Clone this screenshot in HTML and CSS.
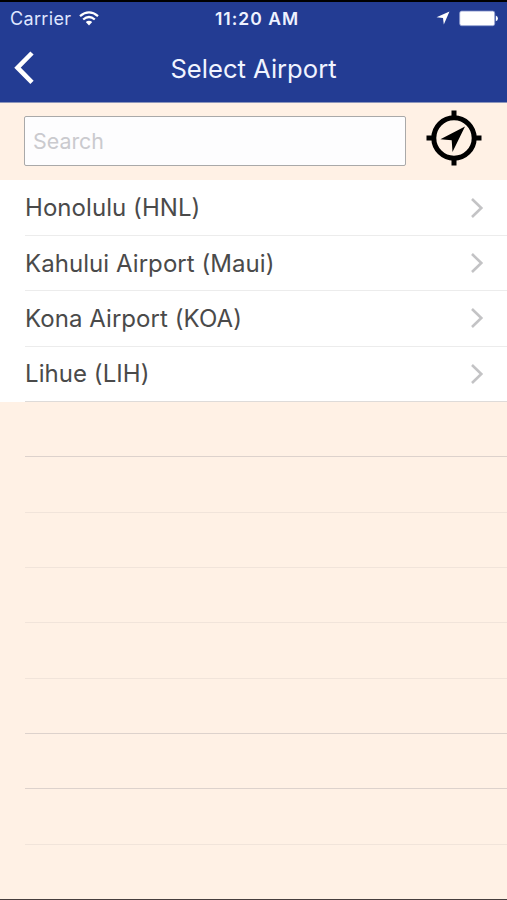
FILE: index.html
```html
<!DOCTYPE html>
<html lang="en">
  <head>
    <meta charset="utf-8">
    <title>Select Airport</title>
    <link rel="stylesheet" href="styles.css">
  </head>
  <body>
    <header>
      <div class="status">
        <div class="carrier">
          <span>Carrier</span>
          <svg class="wifi" width="20" height="15" viewBox="0 0 20 15">
            <path d="M1 5.2Q10-2.4 19 5.2" fill="none" stroke="#fff" stroke-width="2.3"/>
            <path d="M4.2 8.5Q10 3.5 15.8 8.5" fill="none" stroke="#fff" stroke-width="2.3"/>
            <path d="M6.8 11Q10 8.3 13.2 11L10 14.4z" fill="#fff"/>
          </svg>
        </div>
        <div class="time">11:20 AM</div>
        <div class="indicators">
          <svg width="14" height="14" viewBox="0 0 14 14"><path d="M13.5.5L7.8 13.5 7 7 .5 6.3z" fill="#fff"/></svg>
          <svg width="39" height="17" viewBox="0 0 39 17">
            <rect x=".7" y="1.1" width="35" height="14.6" rx="2" fill="#fff" stroke="#8f9dd0" stroke-width=".8"/>
            <path d="M36.8 5.6Q39 6.5 39 8.4T36.8 11.2z" fill="#fff"/>
          </svg>
        </div>
      </div>
      <div class="navbar">
        <a class="back" href="#" aria-label="Back">
          <svg width="22" height="34" viewBox="0 0 22 34"><path d="M19 2L4.5 16.7 19 31.4" fill="none" stroke="#fff" stroke-width="4.6"/></svg>
        </a>
        <h1>Select Airport</h1>
      </div>
    </header>
    <main>
      <div class="searchbar">
        <input class="search" type="text" placeholder="Search">
        <svg class="locate" width="56" height="56" viewBox="0 0 56 56">
          <circle cx="28" cy="28" r="20.2" fill="none" stroke="#000" stroke-width="5"/>
          <path d="M28 .5v9M28 46.5v9M.5 28h9M46.5 28h9" stroke="#000" stroke-width="5"/>
          <path d="M39 16.5L26.5 42 25.7 30.3 14.4 29.3z"/>
        </svg>
      </div>
      <ul class="airports">
        <li><span>Honolulu (HNL)</span><svg class="chevron" width="14" height="22" viewBox="0 0 14 22"><path d="M2 2l9.3 9L2 20" /></svg></li>
        <li><span>Kahului Airport (Maui)</span><svg class="chevron" width="14" height="22" viewBox="0 0 14 22"><path d="M2 2l9.3 9L2 20" /></svg></li>
        <li><span>Kona Airport (KOA)</span><svg class="chevron" width="14" height="22" viewBox="0 0 14 22"><path d="M2 2l9.3 9L2 20" /></svg></li>
        <li><span>Lihue (LIH)</span><svg class="chevron" width="14" height="22" viewBox="0 0 14 22"><path d="M2 2l9.3 9L2 20" /></svg></li>
      </ul>
      <ul class="empty">
        <li class="dark"></li>
        <li></li>
        <li></li>
        <li></li>
        <li></li>
        <li class="dark"></li>
        <li class="dark"></li>
        <li></li>
      </ul>
    </main>
  </body>
</html>
```

FILE: styles.css
```css
* {
  box-sizing: border-box;
}

body {
  display: flex;
  flex-direction: column;
  height: 900px;
  margin: 0;
  overflow: hidden;
  background: #fff1e5;
  border-bottom: 1px solid #463e3d;
  font-family: Inter, "Liberation Sans", sans-serif;
}

header {
  height: 103px;
  flex: none;
  background: #233c93;
  border-top: 2px solid #000;
  border-bottom: 1px solid #8d96bb;
  color: #fff;
}

.status {
  display: grid;
  grid-template-columns: 1fr auto 1fr;
  align-items: center;
  height: 32px;
  padding: 0 9px 0 10px;
  font-size: 18px;
}

.carrier {
  display: flex;
  align-items: center;
  gap: 8px;
  letter-spacing: 0.35px;
  color: #dfe6ff;
}

.time {
  padding-left: 6px;
  font-size: 17.5px;
  font-weight: 600;
  letter-spacing: 1px;
  color: #eef2ff;
}

.indicators {
  display: flex;
  align-items: center;
  justify-content: flex-end;
  gap: 9px;
}

.navbar {
  display: grid;
  grid-template-columns: 50px 1fr 50px;
  align-items: center;
  height: 68px;
}

.back {
  display: flex;
  padding-left: 13px;
}

h1 {
  margin: 0;
  text-align: center;
  font-size: 25.6px;
  font-weight: 400;
  color: #f1f4ff;
}

main {
  flex: 1;
}

.searchbar {
  display: flex;
  gap: 20px;
  height: 77px;
  padding: 7px 25px 0 24px;
}

.search {
  flex: 1;
  min-width: 0;
  height: 50px;
  margin-top: 6px;
  padding: 0 8px;
  background: #fdfdfe;
  border: 1px solid #a9a9a9;
  border-radius: 2px;
  font: 21.4px Inter, "Liberation Sans", sans-serif;
}

.search::placeholder {
  color: #cacace;
  opacity: 1;
}

ul {
  margin: 0;
  padding: 0 0 0 25px;
  list-style: none;
}

li {
  display: flex;
  align-items: center;
  justify-content: space-between;
  height: 55.33px;
  padding-right: 23px;
  border-bottom: 1px solid #ececec;
}

.airports {
  padding-top: 0.6px;
  background: #fff;
  font-size: 24px;
  letter-spacing: 0.06px;
  color: #4a4a4a;
}

.airports li:last-child {
  border-color: #dedbd9;
}

.chevron {
  fill: none;
  stroke: #c3c3c5;
  stroke-width: 2.6;
}

.empty li {
  border-color: #f1e4da;
}

.empty .dark {
  border-color: #ddd2cc;
}
```
